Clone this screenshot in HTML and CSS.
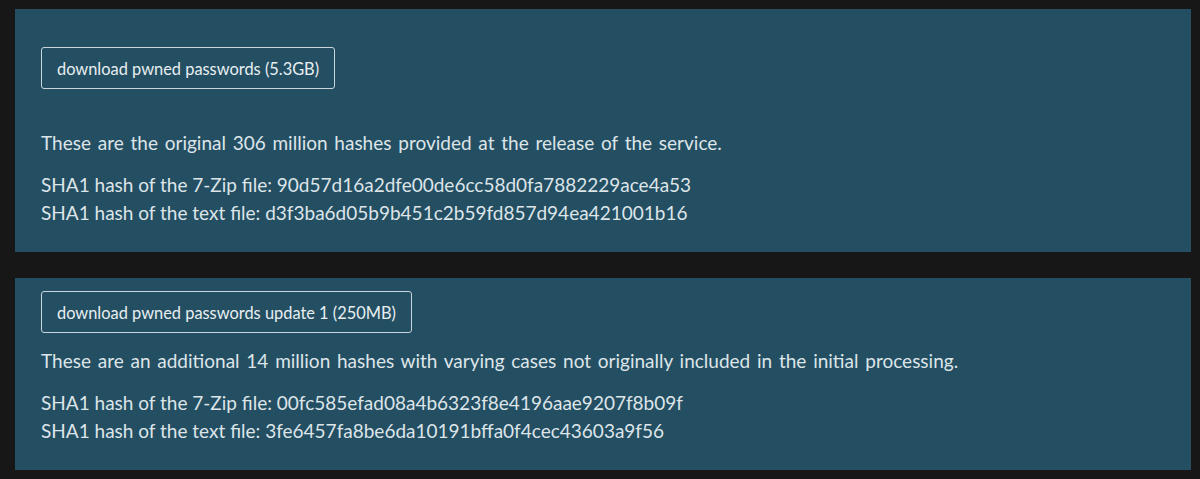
FILE: index.html
```html
<!DOCTYPE html>
<html lang="en">
<head>
<meta charset="utf-8">
<title>Pwned Passwords downloads</title>
<link rel="stylesheet" href="styles.css">
</head>
<body>
<main class="page">
  <section class="panel panel-first">
    <a class="btn" href="#">download pwned passwords (5.3GB)</a>
    <p class="desc">These are the original 306 million hashes provided at the release of the service.</p>
    <div class="hashes">
      <div class="hash">SHA1 hash of the 7-Zip file: 90d57d16a2dfe00de6cc58d0fa7882229ace4a53</div>
      <div class="hash">SHA1 hash of the text file: d3f3ba6d05b9b451c2b59fd857d94ea421001b16</div>
    </div>
  </section>
  <section class="panel panel-second">
    <a class="btn" href="#">download pwned passwords update 1 (250MB)</a>
    <p class="desc">These are an additional 14 million hashes with varying cases not originally included in the initial processing.</p>
    <div class="hashes">
      <div class="hash">SHA1 hash of the 7-Zip file: 00fc585efad08a4b6323f8e4196aae9207f8b09f</div>
      <div class="hash">SHA1 hash of the text file: 3fe6457fa8be6da10191bffa0f4cec43603a9f56</div>
    </div>
  </section>
</main>
</body>
</html>
```
FILE: styles.css
```css
html, body {
  margin: 0;
  padding: 0;
  background: #171717;
}
body {
  font-family: Lato, "Open Sans", "Noto Sans", sans-serif;
  color: #dde5e9;
}
.page {
  display: flex;
  flex-direction: column;
  gap: 26px;
  padding: 9px 9px 8px 15px;
}
.panel {
  background: #244e62;
  width: 1176px;
  box-sizing: border-box;
  padding: 0 26px 25px;
  display: flex;
  flex-direction: column;
  align-items: flex-start;
}
.panel-first {
  padding-top: 38px;
}
.panel-second {
  padding-top: 13px;
}
.btn {
  display: inline-flex;
  align-items: center;
  height: 42px;
  box-sizing: border-box;
  padding: 0 15px;
  border: 1px solid #c9d5db;
  border-radius: 3px;
  color: #e8eef1;
  text-decoration: none;
  font-size: 16.4px;
}
.desc {
  margin: 0;
  font-size: 19px;
  line-height: 28px;
  word-spacing: 1.9px;
}
.panel-first .desc {
  margin-top: 40px;
}
.panel-second .desc {
  margin-top: 14px;
}
.hashes {
  margin-top: 14px;
}
.hash {
  font-size: 19px;
  line-height: 28px;
}
```
